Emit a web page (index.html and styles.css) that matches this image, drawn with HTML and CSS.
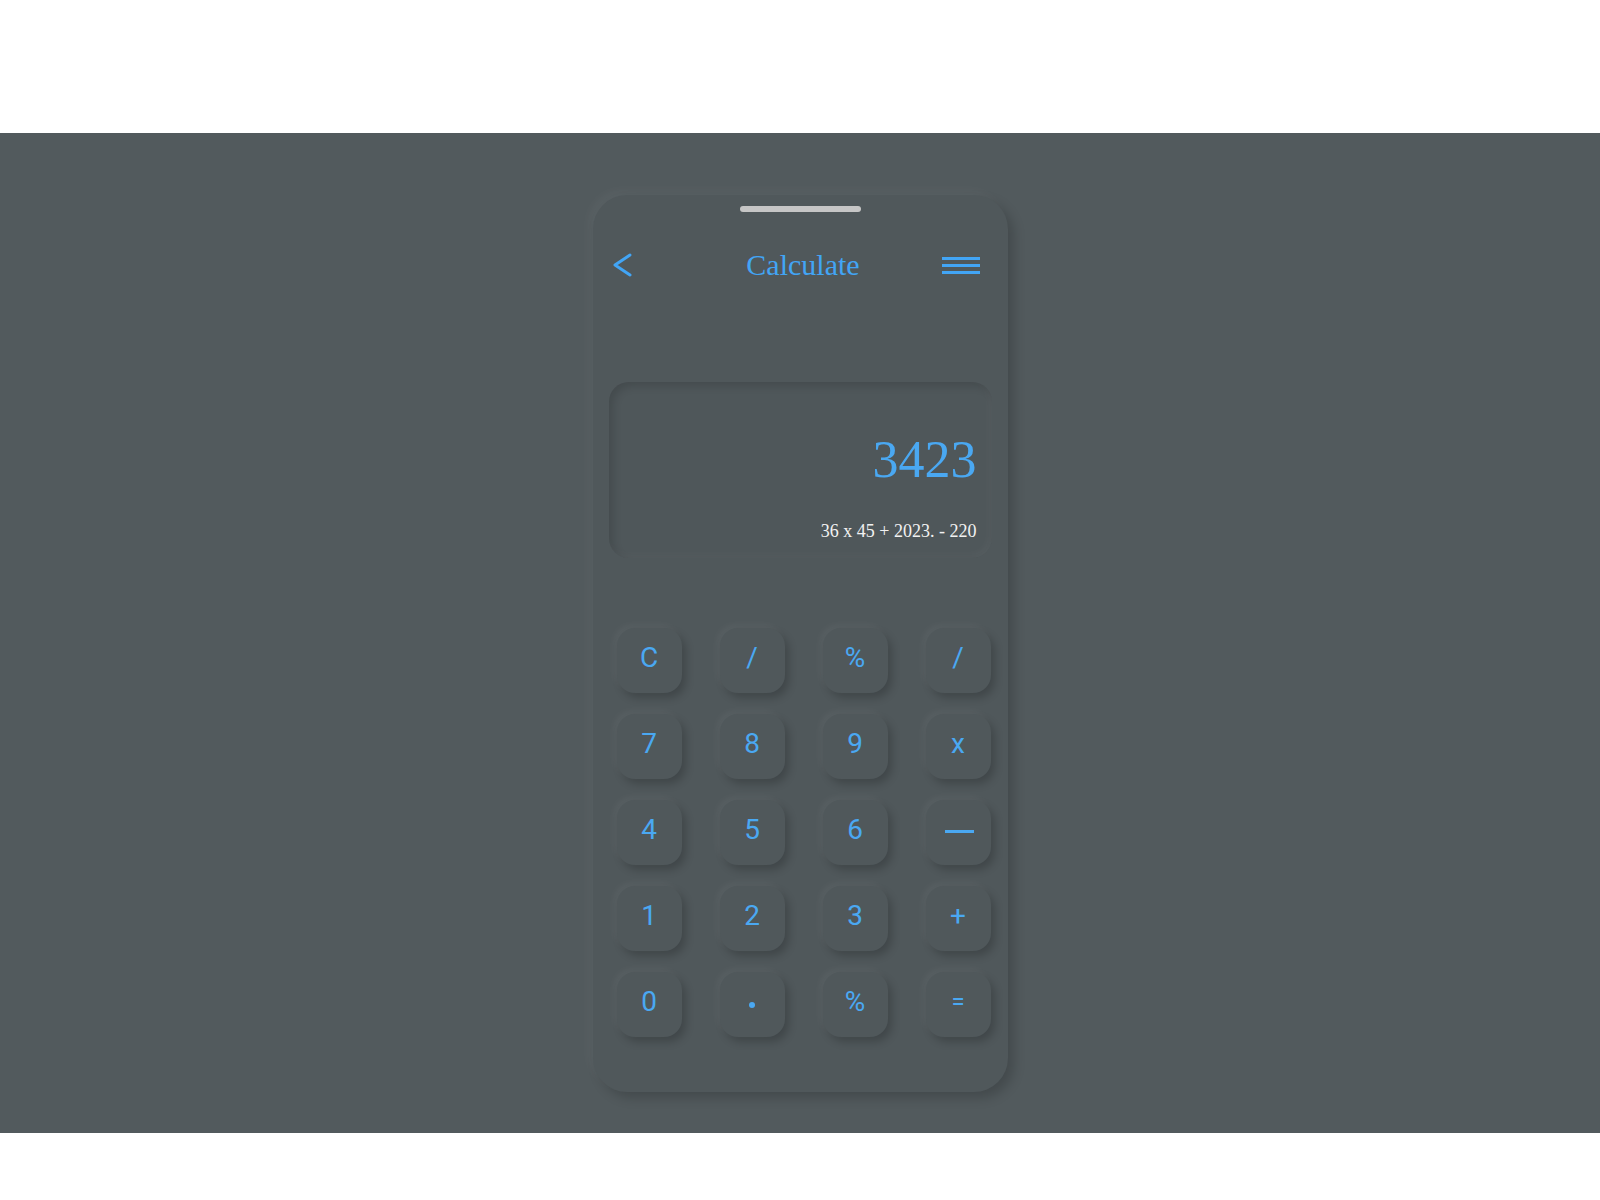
FILE: index.html
```html
<!DOCTYPE html>
<html lang="en">
<head>
    <meta charset="UTF-8">
    <meta name="viewport" content="width=device-width, initial-scale=1.0">
    <title>Calculate</title>
    <link rel="stylesheet" href="styles.css">
</head>
<body>
    <section class="stage">
        <div class="phone">
            <div class="handle"></div>

            <header class="topbar">
                <button class="icon-btn back" type="button" aria-label="Back">
                    <svg width="21" height="24" viewBox="0 0 21 24" fill="none">
                        <path d="M18 2 L3 12 L18 22" stroke="#42a5f5" stroke-width="3" stroke-linecap="round" stroke-linejoin="round"/>
                    </svg>
                </button>
                <h1>Calculate</h1>
                <button class="icon-btn menu" type="button" aria-label="Menu">
                    <span></span><span></span><span></span>
                </button>
            </header>

            <div class="display">
                <div class="result">3423</div>
                <div class="expression">36 x 45 + 2023. - 220</div>
            </div>

            <div class="keypad">
                <button class="key">C</button>
                <button class="key">/</button>
                <button class="key">%</button>
                <button class="key">/</button>

                <button class="key">7</button>
                <button class="key">8</button>
                <button class="key">9</button>
                <button class="key">x</button>

                <button class="key">4</button>
                <button class="key">5</button>
                <button class="key">6</button>
                <button class="key" aria-label="minus"><span class="minus"></span></button>

                <button class="key">1</button>
                <button class="key">2</button>
                <button class="key">3</button>
                <button class="key">+</button>

                <button class="key">0</button>
                <button class="key" aria-label="point"><span class="point"></span></button>
                <button class="key">%</button>
                <button class="key small">=</button>
            </div>
        </div>
    </section>
</body>
</html>
```

FILE: styles.css
```css
body {
    margin: 0;
    padding: 0;
    background: #fff;
    font-family: 'Liberation Serif', 'DejaVu Serif', serif;
}

.stage {
    margin-top: 133px;
    height: 1000px;
    box-sizing: border-box;
    padding-top: 62px;
    background-color: #525a5d;
    display: flex;
    justify-content: center;
    align-items: flex-start;
}

.phone {
    width: 415px;
    height: 897px;
    box-sizing: border-box;
    padding: 11px 16px 0 16px;
    background-color: #50585b;
    border-radius: 34px;
    box-shadow: 6px 6px 12px rgba(0, 0, 0, 0.18), -5px -5px 10px rgba(255, 255, 255, 0.04);
}

.handle {
    width: 121px;
    height: 6px;
    margin: 0 auto;
    border-radius: 3px;
    background-color: #c6c6c6;
}

.topbar {
    margin-top: 36px;
    height: 34px;
    display: grid;
    grid-template-columns: 1fr auto 1fr;
    align-items: center;
}

.topbar h1 {
    margin: 0 0 0 6px;
    font-weight: normal;
    font-size: 30px;
    color: #42a5f5;
    line-height: 34px;
}

.icon-btn {
    background: none;
    border: none;
    padding: 0;
    cursor: pointer;
}

.back {
    justify-self: start;
    margin-left: 3px;
    display: flex;
}

.menu {
    justify-self: end;
    margin-right: 12px;
    width: 38px;
    display: flex;
    flex-direction: column;
    gap: 4px;
}

.menu span {
    display: block;
    height: 3px;
    background-color: #42a5f5;
}

.display {
    margin-top: 100px;
    height: 176px;
    box-sizing: border-box;
    padding: 0 15px 18px 15px;
    border-radius: 20px;
    background-color: #4f575a;
    box-shadow: inset 4px 4px 8px rgba(0, 0, 0, 0.14), inset -3px -3px 7px rgba(255, 255, 255, 0.04);
    display: flex;
    flex-direction: column;
    justify-content: flex-end;
    align-items: flex-end;
}

.result {
    font-size: 52px;
    line-height: 1;
    color: #4aa8f2;
    margin-bottom: 36px;
}

.expression {
    font-size: 18px;
    line-height: 1;
    color: #f2f2f2;
}

.keypad {
    margin-top: 70px;
    padding-left: 8px;
    display: grid;
    grid-template-columns: repeat(4, 65px);
    grid-auto-rows: 65px;
    column-gap: 38px;
    row-gap: 21px;
}

.key {
    border: none;
    border-radius: 18px;
    background-color: #50585b;
    color: #4aa8f2;
    font-family: Roboto, 'Liberation Sans', sans-serif;
    font-size: 28px;
    padding: 0 0 6px 0;
    cursor: pointer;
    display: flex;
    align-items: center;
    justify-content: center;
    box-shadow: 4px 5px 8px rgba(0, 0, 0, 0.2), -3px -3px 7px rgba(255, 255, 255, 0.05);
}

.key.small {
    font-size: 24px;
}

.minus {
    display: block;
    width: 29px;
    height: 3px;
    margin: 4px 0 0 2px;
    background-color: #4aa8f2;
}

.point {
    display: block;
    width: 6px;
    height: 6px;
    margin-top: 6px;
    border-radius: 50%;
    background-color: #4aa8f2;
}
```
